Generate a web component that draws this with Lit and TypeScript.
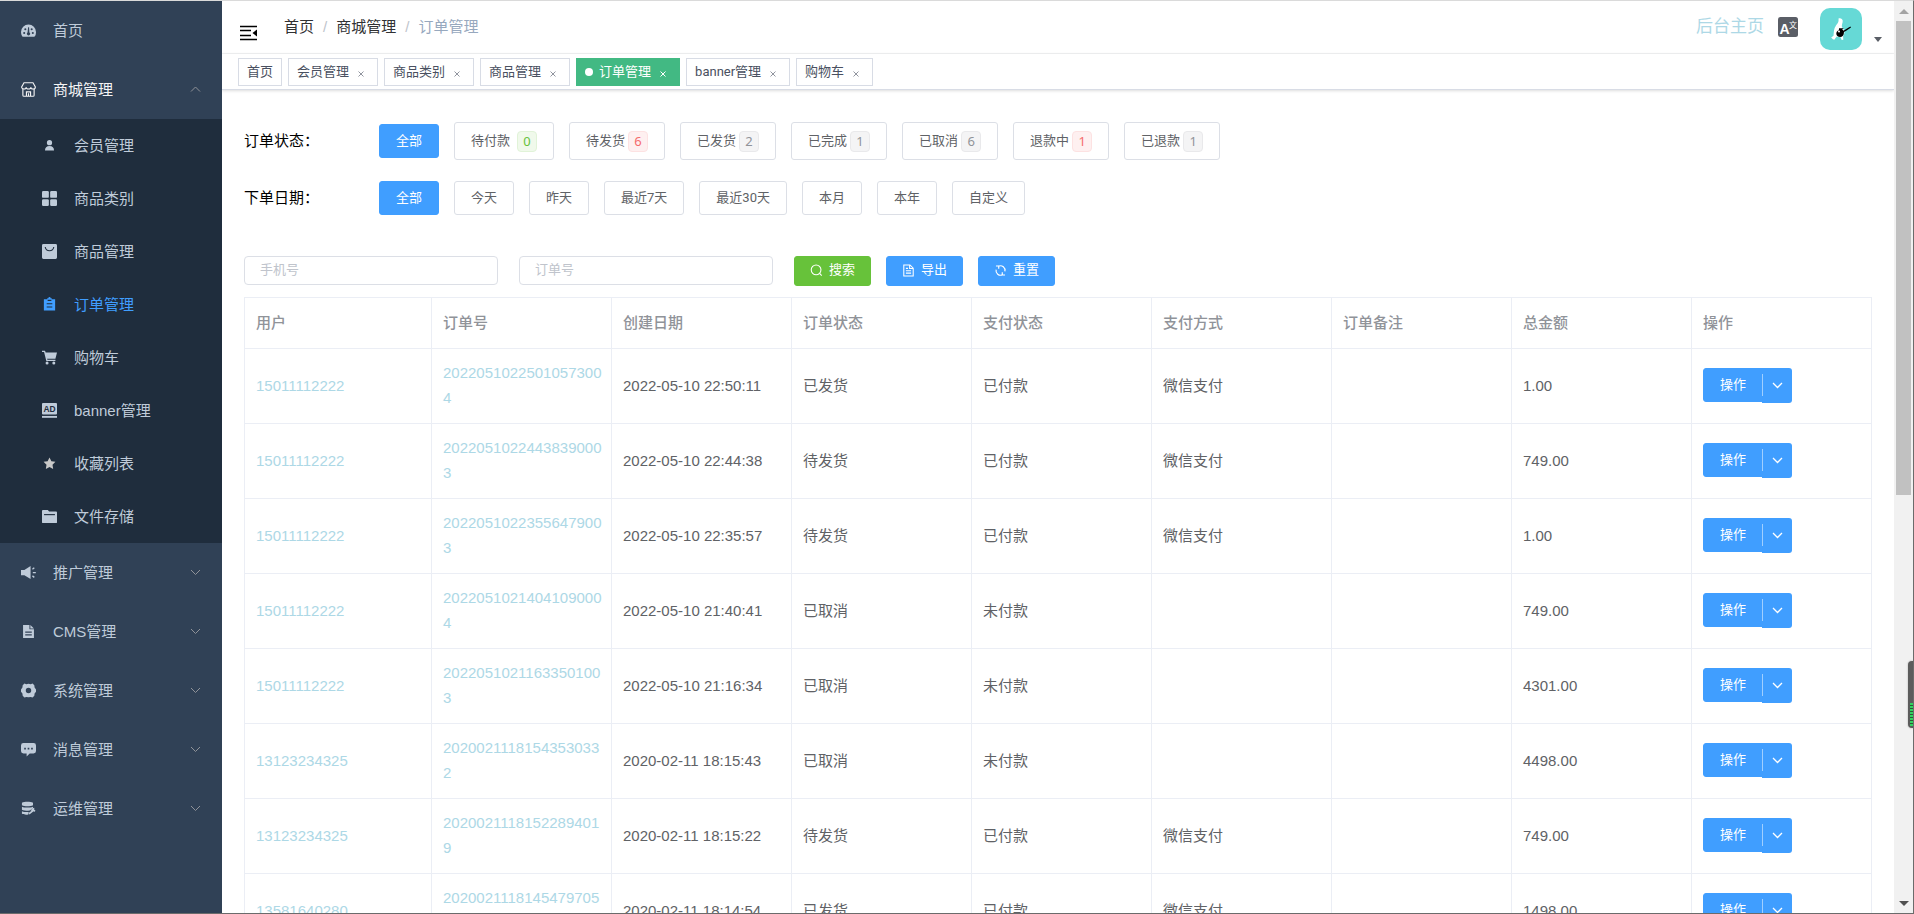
import { LitElement, html, css, svg, nothing } from "lit";
import { customElement, property } from "lit/decorators.js";
import { classMap } from "lit/directives/class-map.js";

const icons: Record<string, unknown> = {
  dashboard: svg`<path fill="currentColor" fill-rule="evenodd" d="M8 1.600a8 8 0 0 0-8 8c0 1.700.4 3.200 1.200 4.600.2.3.5.4.8.4h12c.3 0 .6-.1.8-.4A8.600 8.600 0 0 0 16 9.600a8 8 0 0 0-8-8zM3.400 11.800a1.100 1.100 0 1 1 0-2.200 1.100 1.100 0 0 1 0 2.200zm1.200-4a1.100 1.100 0 1 1 0-2.200 1.100 1.100 0 0 1 0 2.200zM8 13.200a1.700 1.700 0 0 1-1-3.100L7.600 4.400h1L8.900 10A1.700 1.700 0 0 1 8 13.200zm3.400-5.400a1.100 1.100 0 1 1 0-2.200 1.100 1.100 0 0 1 0 2.200zm1.200 4a1.100 1.100 0 1 1 0-2.200 1.100 1.100 0 0 1 0 2.200z"/>`,
  shop: svg`<g fill="none" stroke="currentColor" stroke-width="1.200"><path d="M3.200.8h9.600L15.300 5.200c0 1.400-1 2.300-2.400 2.300S10.500 6.600 10.500 5.500C10.500 6.700 9.500 7.500 8 7.500S5.500 6.700 5.500 5.500c0 1.100-1 2-2.400 2S.7 6.600.7 5.200z"/><path d="M2 7.400v6.600c0 .8.400 1.200 1.200 1.200h9.600c.8 0 1.200-.4 1.200-1.200V7.400M5.800 15v-4.500h4.400V15M8 12v3"/></g>`,
  user: svg`<g fill="currentColor"><circle cx="8" cy="5" r="2.800"/><path d="M3.200 13.300c0-3 1.600-4.800 4.800-4.800s4.800 1.800 4.800 4.800z"/></g>`,
  grid: svg`<g fill="currentColor"><rect x="0" y="0" width="7.300" height="7.300" rx="1.300"/><rect x="8.700" y="0" width="7.300" height="7.300" rx="1.300"/><rect x="0" y="8.700" width="7.300" height="7.300" rx="1.300"/><rect x="8.700" y="8.700" width="7.300" height="7.300" rx="1.300"/></g>`,
  bag: svg`<path fill="currentColor" d="M1.500 0h13A1.500 1.500 0 0 1 16 1.500v13a1.500 1.500 0 0 1-1.500 1.500h-13A1.500 1.500 0 0 1 0 14.500v-13A1.500 1.500 0 0 1 1.500 0z"/><path d="M3.400 3.200a4.700 5 0 0 0 9.200 0" fill="none" stroke="#1f2d3d" stroke-width="1.200"/>`,
  order: svg`<path fill="currentColor" d="M2 2.400h3.600V1.300h1.200a1.200 1.200 0 0 1 2.400 0h1.200v1.100H14V14.500H2z"/><path d="M5 7.300h6M5 10.600h6M6 3.600h4" stroke="#1f2d3d" stroke-width="1.100"/>`,
  cart: svg`<g fill="currentColor"><path d="M0 .8h3.200l.7 1.800H16l-1.700 6.600H5.400l.4 1.300h8.500v1.300H4.600L2.200 2.200H0z"/><circle cx="5.400" cy="13.800" r="1.600"/><circle cx="12.600" cy="13.800" r="1.600"/></g>`,
  ad: svg`<rect x="0" y="0" width="16" height="12.200" rx="1" fill="currentColor"/><rect x="0" y="13.800" width="16" height="2" fill="currentColor"/><text x="8" y="9.400" text-anchor="middle" font-size="9" font-weight="700" font-family="Liberation Sans, sans-serif" fill="#1f2d3d">AD</text>`,
  star: svg`<path fill="#c8c8c8" d="M8 1.600l2 4 4.300.6-3.100 3.100.7 4.500L8 11.700l-3.900 2.100.7-4.500-3.100-3.100 4.300-.6z"/>`,
  folder: svg`<path fill="currentColor" d="M0 2a1 1 0 0 1 1-1h5.200l1.400 1.600H15a1 1 0 0 1 1 1V14a1 1 0 0 1-1 1H1a1 1 0 0 1-1-1z"/><path d="M2.200 6h11.600" stroke="#1f2d3d" stroke-width="1.200"/>`,
  horn: svg`<path fill="currentColor" d="M0 5.300h3.600L10.200 1v14L3.600 11H0z"/><path d="M12.200 4.600l2-1.600M12.600 8.200h3.200M12.200 11.600l2 1.600" stroke="currentColor" stroke-width="1.400"/>`,
  doc: svg`<path fill="currentColor" fill-rule="evenodd" d="M2.200 1H9v4.700h4.800V15H2.200zM4.500 8v1.200h7V8zm0 3v1.200h7V11z"/><path fill="currentColor" d="M10 1l3.800 3.800H10z"/>`,
  gear: svg`<path fill="currentColor" fill-rule="evenodd" d="M3.700.6L5.600 1.200 8 .9l2.400.3 1.900-.6 1.900 1.700.3 2.400L16 6.800v2.400l-1.500 2.100-.3 2.400-1.900 1.700-1.900-.6L8 15.100l-2.400-.3-1.900.6-1.900-1.700-.3-2.400L0 9.200V6.800l1.500-2.100.3-2.400zM8 5.100a2.900 2.900 0 1 0 0 5.800 2.900 2.900 0 0 0 0-5.800z"/>`,
  message: svg`<path fill="currentColor" fill-rule="evenodd" d="M2.600 1h10.800A2.600 2.600 0 0 1 16 3.600v6a2.600 2.600 0 0 1-2.600 2.600H9.300L6 15.500v-3.300H2.600A2.600 2.600 0 0 1 0 9.600v-6A2.600 2.600 0 0 1 2.600 1zM3.400 6.200v1.800h1.800V6.200zm3.700 0v1.800h1.800V6.200zm3.700 0v1.800h1.800V6.200z"/>`,
  ops: svg`<path fill="currentColor" d="M1 1.800C3.600.4 10 .4 12.800 1.800v2.700C10 6 3.600 6 1 4.500z"/><path fill="currentColor" d="M1 6c2.600 1.400 9 1.400 11.800 0v1.600c-1.700.5-2.600 1.400-3 2.600C6.500 10.500 2.500 10 1 9.200z"/><path fill="currentColor" d="M1 10.800c1.800.8 4.800 1.100 7.200.9l-.4 2.700C5 14.900 2.400 14.400 1 13.600z"/><path d="M8.500 13.600l3.300-2.400c-.5-1.400.2-2.700 1.500-3v2l1.800.5" fill="none" stroke="currentColor" stroke-width="1.700"/>`,
  search: svg`<circle cx="7.500" cy="7.200" r="6" fill="none" stroke="currentColor" stroke-width="1.300"/><path d="M11.800 11.600l2.600 2.800" stroke="currentColor" stroke-width="1.300"/>`,
  export: svg`<path d="M2.200 1.200h7.600l4 4v9.600H2.200zM9.400 1.400v4.200h4.200M4.800 5.400h2.600M4.800 8.200h6.400M4.800 11.200h6.400" fill="none" stroke="currentColor" stroke-width="1.300"/>`,
  reset: svg`<path d="M5.600 2.700A5.600 5.600 0 0 1 13.400 9M2.600 7a5.600 5.600 0 0 0 7.800 6.300M5.800 5.800V2.500H2.400M10.200 10.200v3.300h3.400" fill="none" stroke="currentColor" stroke-width="1.400"/>`,
};

const icon = (name: string) =>
  html`<svg class="icon" viewBox="0 0 16 16" aria-hidden="true">${icons[name]}</svg>`;

@customElement("side-menu")
class SideMenu extends LitElement {
  static styles = css`
    :host {
      display: block;
      flex: none;
      width: 222px;
      background: #304156;
      color: #bfcbd9;
      font: 15px/20px "Liberation Sans", "Noto Sans CJK SC", sans-serif;
      overflow: hidden;
    }
    .item {
      display: flex;
      align-items: center;
      box-sizing: border-box;
      width: 100%;
      height: 59px;
      padding: 0 21px;
      border: 0;
      background: none;
      color: inherit;
      font: inherit;
      text-decoration: none;
      text-align: left;
      cursor: pointer;
    }
    .item.open { color: #f4f4f5; }
    .icon { width: 15px; height: 15px; margin-right: 17px; flex: none; }
    .label { flex: 1; }
    .arrow { width: 11px; height: 11px; color: #909399; }
    .sub { background: #1f2d3d; }
    .sub .item { height: 53px; padding-left: 42px; }
    .sub .active { color: #409eff; }
  `;

  private top = [["dashboard", "首页"]];
  private sub = [
    ["user", "会员管理"],
    ["grid", "商品类别"],
    ["bag", "商品管理"],
    ["order", "订单管理"],
    ["cart", "购物车"],
    ["ad", "banner管理"],
    ["star", "收藏列表"],
    ["folder", "文件存储"],
  ];
  private groups = [
    ["horn", "推广管理"],
    ["doc", "CMS管理"],
    ["gear", "系统管理"],
    ["message", "消息管理"],
    ["ops", "运维管理"],
  ];

  private group(name: string, label: string, open: boolean) {
    return html`<button class=${classMap({ item: true, open })} aria-expanded=${open ? "true" : "false"}>
      ${icon(name)}<span class="label">${label}</span>
      <svg class="arrow" viewBox="0 0 11 11" aria-hidden="true">
        <path d=${open ? "M1 7.500L5.500 3l4.500 4.500" : "M1 3l4.500 4.500L10 3"} fill="none" stroke="currentColor" />
      </svg>
    </button>`;
  }

  render() {
    return html`<nav>
      ${this.top.map(([i, l]) => html`<a class="item" href="#">${icon(i)}<span class="label">${l}</span></a>`)}
      ${this.group("shop", "商城管理", true)}
      <div class="sub">
        ${this.sub.map(
          ([i, l]) =>
            html`<a class=${classMap({ item: true, active: l === "订单管理" })} href="#">${icon(i)}<span class="label">${l}</span></a>`
        )}
      </div>
      ${this.groups.map(([i, l]) => this.group(i, l, false))}
    </nav>`;
  }
}

@customElement("nav-header")
class NavHeader extends LitElement {
  static styles = css`
    :host {
      display: block;
      background: #fff;
      position: relative;
      font: 15px/20px "Liberation Sans", "Noto Sans CJK SC", sans-serif;
    }
    button { border: 0; padding: 0; background: none; color: inherit; font: inherit; cursor: pointer; }
    a { text-decoration: none; }
    .bar {
      display: flex;
      align-items: center;
      height: 52px;
      padding: 0 12px 0 18px;
      border-bottom: 1px solid #f3f4f5;
    }
    .fold { width: 17px; height: 17px; margin: 12px 27px 0 0; }
    .fold svg { display: block; }
    .crumbs { display: flex; gap: 9px; flex: 1; }
    .crumbs a { color: #303133; }
    .crumbs span { color: #97a8be; }
    .crumbs i { color: #c0c4cc; font-style: normal; }
    .home { color: #add8e6; font-size: 17px; margin-right: 14px; }
    .lang { width: 20px; height: 20px; margin-right: 22px; }
    .lang svg { display: block; }
    .user { display: flex; align-items: flex-end; gap: 12px; margin-top: 4px; }
    .avatar { display: block; width: 42px; height: 42px; border-radius: 10px; }
    .caret { width: 8px; height: 5px; margin-bottom: 8px; }
    .tabs {
      display: flex;
      gap: 6px;
      padding: 4px 16px 3px;
      border-bottom: 1px solid #d8dce5;
      box-shadow: 0 1px 3px rgba(0, 0, 0, 0.12), 0 0 3px rgba(0, 0, 0, 0.04);
    }
    .tab {
      display: flex;
      align-items: center;
      height: 26px;
      padding: 0 8px;
      border: 1px solid #d8dce5;
      color: #495060;
      font: 13px/20px Roboto, "Noto Sans CJK SC", sans-serif;
    }
    .tab a { color: inherit; }
    .tab.on { background: #42b983; border-color: #42b983; color: #fff; }
    .dot { width: 8px; height: 8px; border-radius: 50%; background: #fff; margin-right: 6px; }
    .close { display: flex; justify-content: center; width: 16px; margin: 3px 0 0 4px; opacity: 0.6; }
    .on .close { opacity: 1; }
  `;

  private tabs = ["首页", "会员管理", "商品类别", "商品管理", "订单管理", "banner管理", "购物车"];

  render() {
    return html`
      <div class="bar">
        <button class="fold" aria-label="折叠菜单">
          <svg width="17" height="16" viewBox="0 0 17 16">
            <path d="M0 1.500h17M0 5.500h11M0 10.500h11M0 14.500h17" stroke="#000" stroke-width="1.400" />
            <path d="M17 4.500v7L12.500 8z" />
          </svg>
        </button>
        <nav class="crumbs">
          <a href="#">首页</a><i>/</i><a href="#">商城管理</a><i>/</i><span>订单管理</span>
        </nav>
        <a class="home" href="#">后台主页</a>
        <button class="lang" aria-label="语言">
          <svg width="20" height="20" viewBox="0 0 20 20">
            <rect width="20" height="20" rx="2.500" fill="#5a5e66" />
            <text x="1.500" y="16.500" font-size="14" font-weight="700" font-family="Liberation Sans, sans-serif" fill="#fff">A</text>
            <text x="11" y="10.500" font-size="8" font-family="Noto Sans CJK SC, sans-serif" fill="#fff">文</text>
          </svg>
        </button>
        <button class="user" aria-label="用户菜单">
          <svg class="avatar" viewBox="0 0 42 42">
            <rect width="42" height="42" fill="#66d9d6" />
            <path
              fill="#fff"
              d="M18.500 10.500c2-.8 4 .2 4.200 2.300.2 2.200-1.200 4-.8 6 .6 1.800 2.600 2.600 2.600 5.200 0 1.800-1 3-1.400 4.200l.2 3.600-1.600.2-1.400-3c-1.500.2-2.600-.2-3.600-.6l-2.400 3.400-1.400-.6-1.700-1.800 2.300-1.600c.4-4 .1-7 2.500-10.300 1.300-1.800 3-3.200 2.500-7z"
            />
            <path d="M19 20.300h4.300v.8h-1.200l1.500 1.600 2.600-1.600 4.200-2.600.6.900-4.400 3-2.600 1.600c0 3.200-1.600 5-3.900 5-2.300 0-3.800-1.500-3.800-3.500 0-1.400 1-2.600 2.500-3.200z" />
            <circle cx="19" cy="23.600" r="1" fill="#fff" />
          </svg>
          <svg class="caret" viewBox="0 0 8 5"><path d="M0 0h8L4 5z" fill="#5a5e66" /></svg>
        </button>
      </div>
      <div class="tabs">
        ${this.tabs.map((t, i) => {
          const on = t === "订单管理";
          return html`<div class=${classMap({ tab: true, on })}>
            ${on ? html`<span class="dot"></span>` : nothing}<a href="#">${t}</a>
            ${i > 0
              ? html`<button class="close" aria-label="关闭">
                  <svg width="6" height="6" viewBox="0 0 6 6"><path d="M.5.5l5 5M5.500.5l-5 5" stroke="currentColor" /></svg>
                </button>`
              : nothing}
          </div>`;
        })}
      </div>
    `;
  }
}

type Order = [string, string, string, string, string, string, string, string];

@customElement("order-page")
class OrderPage extends LitElement {
  static styles = css`
    :host {
      display: block;
      padding: 32px 22px 0;
      color: #000;
      font: 15px/20px "Liberation Sans", "Noto Sans CJK SC", sans-serif;
    }
    .filter { display: flex; align-items: center; margin-bottom: 21px; }
    .name { flex: none; width: 135px; }
    .options { display: flex; flex-wrap: wrap; align-items: center; gap: 15px; }
    .btn {
      display: flex;
      align-items: center;
      box-sizing: border-box;
      height: 34px;
      padding: 0 16px;
      border: 1px solid #dcdfe6;
      border-radius: 3px;
      background: #fff;
      color: #606266;
      font: 13px/20px Roboto, "Noto Sans CJK SC", sans-serif;
      white-space: nowrap;
      cursor: pointer;
    }
    .counted { height: 38px; gap: 3px; }
    .green-count { gap: 7px; }
    .primary { background: #409eff; border-color: #409eff; color: #fff; }
    .success { background: #67c23a; border-color: #67c23a; color: #fff; }
    .tag {
      box-sizing: border-box;
      width: 20px;
      height: 21px;
      border: 1px solid #e9e9eb;
      border-radius: 4px;
      background: #f4f4f5;
      color: #909399;
      font-family: "Noto Sans", sans-serif;
      line-height: 19px;
      text-align: center;
    }
    .tag.ok { background: #f0f9eb; border-color: #e1f3d8; color: #67c23a; }
    .tag.bad { background: #fef0f0; border-color: #fde2e2; color: #f56c6c; }
    .search { display: flex; align-items: flex-start; gap: 15px; margin: 41px 0 11px; }
    .search input {
      box-sizing: border-box;
      width: 254px;
      height: 29px;
      margin-right: 6px;
      padding: 0 15px 2px;
      border: 1px solid #dcdfe6;
      border-radius: 4px;
      color: #606266;
      font: 13px/20px Roboto, "Noto Sans CJK SC", sans-serif;
    }
    .search input::placeholder { color: #c0c4cc; }
    .search .btn { height: 30px; padding: 0 15px 2px; }
    .icon { width: 13px; height: 13px; margin-right: 6px; }
    table {
      width: 100%;
      table-layout: fixed;
      border-collapse: separate;
      border-spacing: 0;
      border: solid #ebeef5;
      border-width: 1px 0 0 1px;
      color: #606266;
      line-height: 25px;
    }
    th, td {
      padding: 11px 9px 13px 11px;
      border: solid #ebeef5;
      border-width: 0 1px 1px 0;
      text-align: left;
      vertical-align: middle;
      word-break: break-all;
    }
    th { color: #909399; font-weight: 500; padding-top: 12px; }
    .first { width: 166px; }
    td a { color: #add8e6; text-decoration: none; }
    .split { display: flex; align-items: flex-start; }
    .split .btn { border-radius: 3px 0 0 3px; }
    .split .more { height: 35px; margin-left: -1px; padding: 0 9px 0 0; border-width: 0; border-radius: 0 3px 3px 0; gap: 9px; }
    .line { width: 1px; height: 22px; background: rgba(255, 255, 255, 0.5); }
  `;

  private states: [string, number, string][] = [
    ["待付款", 0, "ok"],
    ["待发货", 6, "bad"],
    ["已发货", 2, ""],
    ["已完成", 1, ""],
    ["已取消", 6, ""],
    ["退款中", 1, "bad"],
    ["已退款", 1, ""],
  ];
  private dates = ["今天", "昨天", "最近7天", "最近30天", "本月", "本年", "自定义"];
  private columns = ["用户", "订单号", "创建日期", "订单状态", "支付状态", "支付方式", "订单备注", "总金额", "操作"];

  @property({ attribute: false })
  orders: Order[] = [
    ["15011112222", "20220510225010573004", "2022-05-10 22:50:11", "已发货", "已付款", "微信支付", "", "1.00"],
    ["15011112222", "20220510224438390003", "2022-05-10 22:44:38", "待发货", "已付款", "微信支付", "", "749.00"],
    ["15011112222", "20220510223556479003", "2022-05-10 22:35:57", "待发货", "已付款", "微信支付", "", "1.00"],
    ["15011112222", "20220510214041090004", "2022-05-10 21:40:41", "已取消", "未付款", "", "", "749.00"],
    ["15011112222", "20220510211633501003", "2022-05-10 21:16:34", "已取消", "未付款", "", "", "4301.00"],
    ["13123234325", "20200211181543530332", "2020-02-11 18:15:43", "已取消", "未付款", "", "", "4498.00"],
    ["13123234325", "20200211181522894019", "2020-02-11 18:15:22", "待发货", "已付款", "微信支付", "", "749.00"],
    ["13581640280", "20200211181454797051", "2020-02-11 18:14:54", "已发货", "已付款", "微信支付", "", "1498.00"],
  ];

  render() {
    return html`
      <div class="filter" role="group" aria-labelledby="state">
        <span class="name" id="state">订单状态：</span>
        <div class="options">
          <button class="btn primary">全部</button>
          ${this.states.map(
            ([label, n, kind]) => html`<button
              class=${classMap({ btn: true, counted: true, "green-count": kind === "ok" })}
            >
              ${label}<span class=${classMap({ tag: true, ok: kind === "ok", bad: kind === "bad" })}>${n}</span>
            </button>`
          )}
        </div>
      </div>
      <div class="filter" role="group" aria-labelledby="date">
        <span class="name" id="date">下单日期：</span>
        <div class="options">
          <button class="btn primary">全部</button>
          ${this.dates.map((d) => html`<button class="btn">${d}</button>`)}
        </div>
      </div>
      <div class="search">
        <input type="text" aria-label="手机号" placeholder="手机号" />
        <input type="text" aria-label="订单号" placeholder="订单号" />
        <button class="btn success">${icon("search")}搜索</button>
        <button class="btn primary">${icon("export")}导出</button>
        <button class="btn primary">${icon("reset")}重置</button>
      </div>
      <table>
        <thead>
          <tr>
            ${this.columns.map((c, i) => html`<th class=${i ? "" : "first"}>${c}</th>`)}
          </tr>
        </thead>
        <tbody>
          ${this.orders.map(
            (o) => html`<tr>
              ${o.map((v, i) => html`<td>${i < 2 ? html`<a href="#">${v}</a>` : v}</td>`)}
              <td>
                <div class="split">
                  <button class="btn primary">操作</button>
                  <button class="btn primary more" aria-label="更多操作">
                    <span class="line"></span>
                    <svg width="11" height="11" viewBox="0 0 11 11">
                      <path d="M1 3l4.500 4.500L10 3" fill="none" stroke="currentColor" stroke-width="1.300" />
                    </svg>
                  </button>
                </div>
              </td>
            </tr>`
          )}
        </tbody>
      </table>
    `;
  }
}

@customElement("app-root")
class AppRoot extends LitElement {
  static styles = css`
    :host {
      display: flex;
      box-sizing: border-box;
      height: 100vh;
      position: relative;
      overflow: hidden;
      border: solid #6b6b6b;
      border-width: 1px 1px 1px 0;
      border-top-color: #dadada;
      background: #fff;
    }
    .main { flex: 1; min-width: 0; overflow: hidden; }
    .scroll {
      display: flex;
      flex-direction: column;
      align-items: center;
      flex: none;
      width: 19px;
      background: #f1f1f1;
    }
    .up, .down { flex: none; width: 10px; height: 5px; margin: 8px 0 7px; }
    .track { flex: 1; width: 15px; }
    .thumb { height: 54.4%; background: #c1c1c1; }
    .widget {
      position: absolute;
      right: -1px;
      top: 660px;
      box-sizing: border-box;
      width: 6px;
      height: 67px;
      padding: 42px 0 2px 2px;
      border-radius: 4px 0 0 4px;
      background: #5c5c5c;
      box-shadow: 0 0 2px rgba(0, 0, 0, 0.3);
    }
    .level { height: 23px; background: repeating-linear-gradient(#33d35f 0 2px, #2b5a38 2px 3px); }
  `;

  render() {
    return html`
      <side-menu></side-menu>
      <div class="main">
        <nav-header></nav-header>
        <order-page></order-page>
      </div>
      <div class="scroll" aria-hidden="true">
        <svg class="up" viewBox="0 0 10 5"><path d="M5 0l5 5H0z" fill="#a3a3a3" /></svg>
        <div class="track"><div class="thumb"></div></div>
        <svg class="down" viewBox="0 0 10 5"><path d="M0 0h10L5 5z" fill="#505050" /></svg>
      </div>
      <div class="widget" aria-hidden="true"><div class="level"></div></div>
    `;
  }
}
